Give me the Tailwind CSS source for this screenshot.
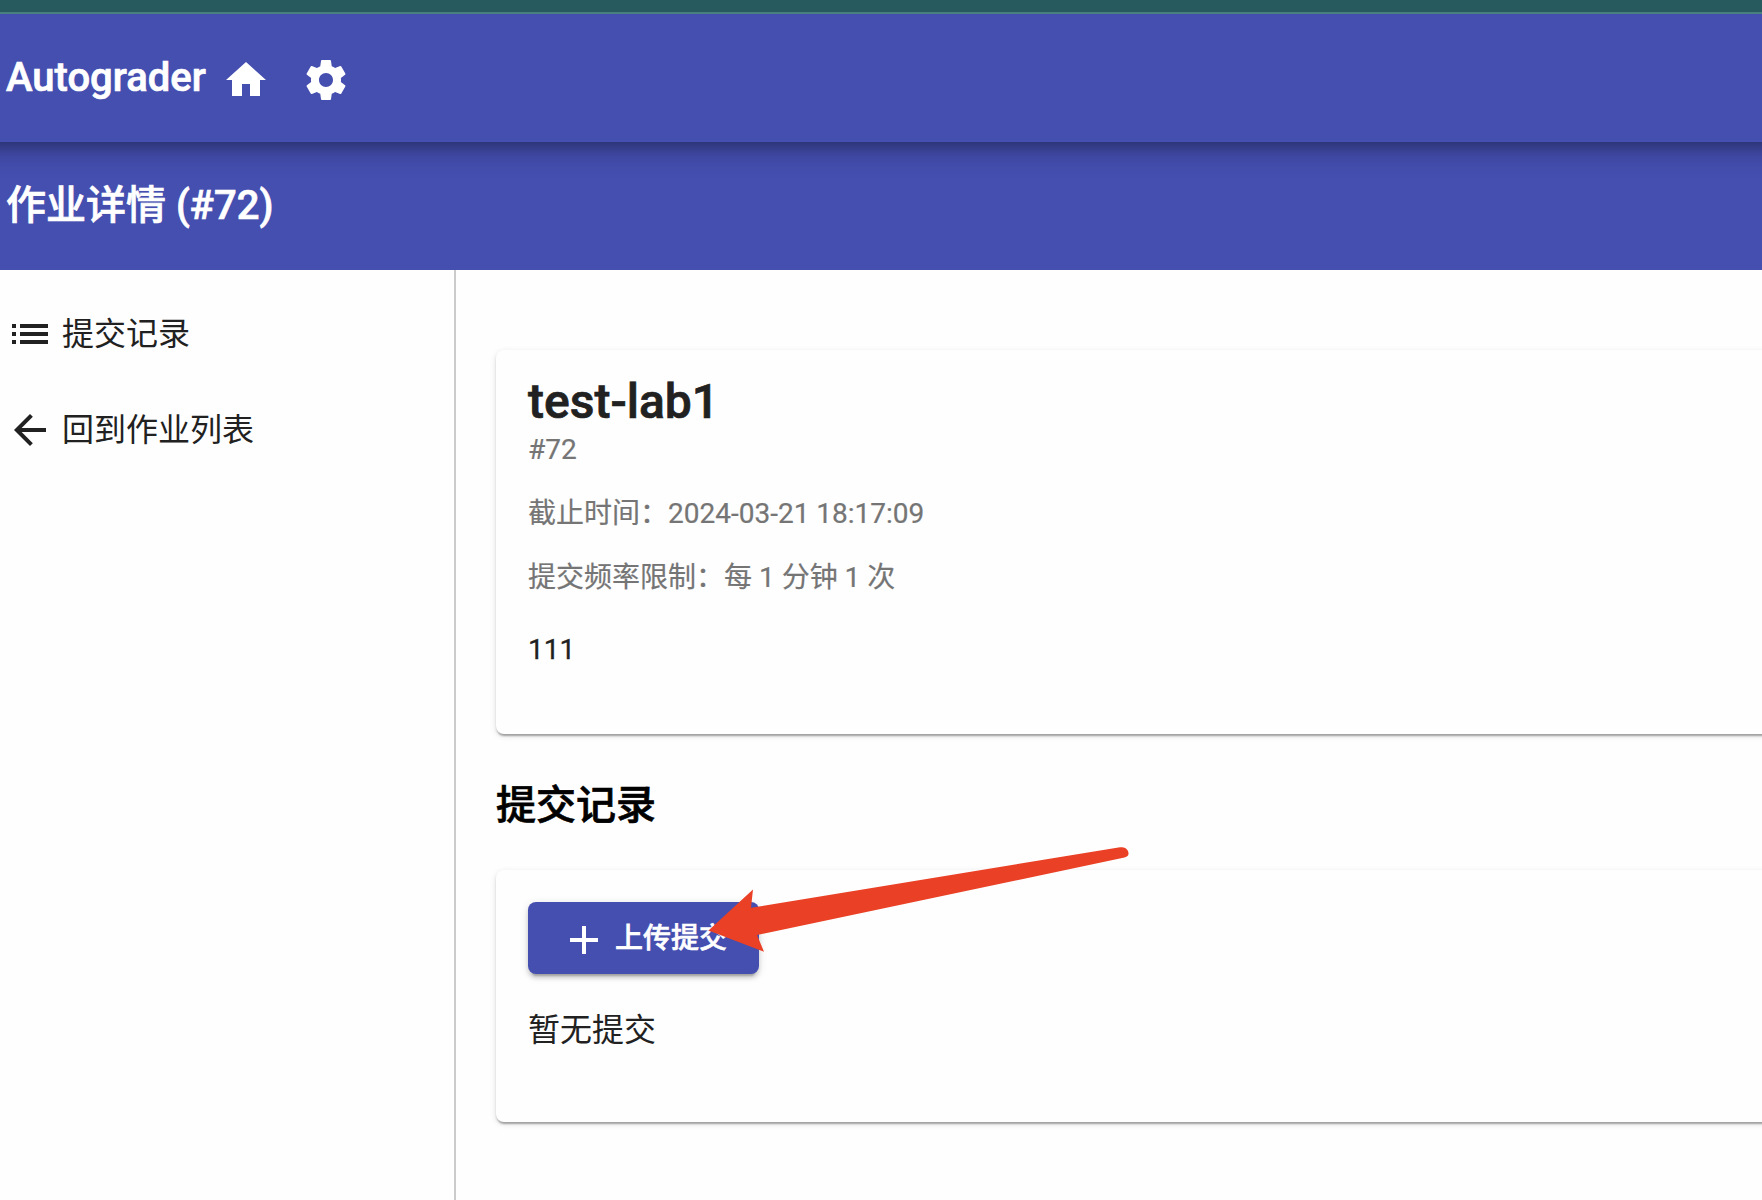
<!DOCTYPE html>
<html lang="zh-CN">
<head>
<meta charset="utf-8">
<title>Autograder</title>
<script src="https://cdn.jsdelivr.net/npm/@tailwindcss/browser@4"></script>
</head>
<body class="relative flex h-[1200px] w-[1762px] flex-col overflow-hidden bg-[#fefefe] font-[Roboto,'Noto_Sans_CJK_SC',sans-serif] text-[#212121]">
  <div class="relative z-20 h-[14px] shrink-0 border-b-2 border-[#47807f] bg-[#265a5f]"></div>
  <header class="relative z-10 -mx-10 flex h-32 shrink-0 items-center bg-[#454fb0] pl-[46px] text-white shadow-[0_6px_10px_-2px_rgba(0,0,0,0.2),0_12px_20px_0_rgba(0,0,0,0.14),0_2px_36px_0_rgba(0,0,0,0.12)]">
    <h1 class="w-[216px] whitespace-nowrap text-[40px] font-medium leading-[64px] [-webkit-text-stroke:0.7px]">Autograder</h1>
    <svg class="mt-1 size-12" viewBox="0 0 24 24" fill="currentColor"><path d="M10 20v-6h4v6h5v-8h3L12 3 2 12h3v8z"/></svg>
    <svg class="mt-1 ml-8 size-12" viewBox="0 0 24 24" fill="currentColor"><path d="M19.43 12.98c.04-.32.07-.64.07-.98s-.03-.66-.07-.98l2.11-1.65c.19-.15.24-.42.12-.64l-2-3.46c-.12-.22-.39-.3-.61-.22l-2.49 1c-.52-.4-1.08-.73-1.69-.98l-.38-2.65C14.46 2.18 14.25 2 14 2h-4c-.25 0-.46.18-.49.42l-.38 2.65c-.61.25-1.17.59-1.69.98l-2.49-1c-.23-.09-.49 0-.61.22l-2 3.46c-.13.22-.07.49.12.64l2.11 1.65c-.04.32-.07.65-.07.98s.03.66.07.98l-2.11 1.65c-.19.15-.24.42-.12.64l2 3.46c.12.22.39.3.61.22l2.49-1c.52.4 1.08.73 1.69.98l.38 2.65c.03.24.24.42.49.42h4c.25 0 .46-.18.49-.42l.38-2.65c.61-.25 1.17-.59 1.69-.98l2.49 1c.23.09.49 0 .61-.22l2-3.46c.12-.22.07-.49-.12-.64l-2.11-1.65zM12 15.5c-1.93 0-3.5-1.57-3.5-3.5s1.57-3.500 3.500-3.500 3.500 1.570 3.500 3.500-1.570 3.500-3.500 3.500z"/></svg>
  </header>
  <div class="flex h-32 shrink-0 items-center bg-[#454fb0] pl-1.5 text-white">
    <h2 class="relative z-20 text-[40px] font-medium leading-[64px] [-webkit-text-stroke:0.7px]">作业详情 (#72)</h2>
  </div>
  <div class="flex flex-1">
    <nav class="w-[456px] shrink-0 border-r-2 border-[#cbcbcb] pt-4 text-[32px]">
      <a class="flex h-24 items-center pl-1.5"><svg class="mr-2 size-12" viewBox="0 0 24 24" fill="currentColor"><path d="M3 13h2v-2H3v2zm0 4h2v-2H3v2zm0-8h2V7H3v2zm4 4h14v-2H7v2zm0 4h14v-2H7v2zM7 7v2h14V7H7z"/></svg>提交记录</a>
      <a class="flex h-24 items-center pl-1.5"><svg class="mr-2 size-12" viewBox="0 0 24 24" fill="currentColor"><path d="M20 11H7.83l5.59-5.59L12 4l-8 8 8 8 1.41-1.41L7.83 13H20v-2z"/></svg>回到作业列表</a>
    </nav>
    <main class="min-w-0 flex-1 pl-10 pt-20">
      <section class="-mr-4 h-96 rounded-lg bg-[#fefefe] px-8 pt-5 text-[28px] leading-8 shadow-[0_4px_2px_-2px_rgba(0,0,0,0.2),0_2px_2px_0_rgba(0,0,0,0.14),0_2px_6px_0_rgba(0,0,0,0.12)]">
        <h3 class="text-[48px] font-medium leading-[64px] [-webkit-text-stroke:0.7px]">test-lab1</h3>
        <div class="text-[#757575] [-webkit-text-stroke:0.2px]">
          <p>#72</p>
          <p class="mt-8">截止时间：2024-03-21 18:17:09</p>
          <p class="mt-8">提交频率限制：每 1 分钟 1 次</p>
        </div>
        <p class="mt-10 [-webkit-text-stroke:0.3px]">111</p>
      </section>
      <h3 class="mt-10 text-[40px] font-medium leading-[64px] text-black [-webkit-text-stroke:0.7px]">提交记录</h3>
      <section class="-mr-4 mt-8 h-[252px] rounded-lg bg-[#fefefe] px-8 pt-8 shadow-[0_4px_2px_-2px_rgba(0,0,0,0.2),0_2px_2px_0_rgba(0,0,0,0.14),0_2px_6px_0_rgba(0,0,0,0.12)]">
        <button class="flex h-[72px] w-[231px] items-center rounded-lg bg-[#454fb0] pl-8 text-[28px] font-medium text-white shadow-[0_6px_2px_-4px_rgba(0,0,0,0.2),0_4px_4px_0_rgba(0,0,0,0.14),0_2px_10px_0_rgba(0,0,0,0.12)]"><svg class="mt-1 mr-[7px] size-12" viewBox="0 0 24 24" fill="currentColor"><path d="M19 13h-6v6h-2v-6H5v-2h6V5h2v6h6z"/></svg><span class="whitespace-nowrap pt-0.5 [-webkit-text-stroke:0.6px]">上传提交</span></button>
        <p class="mt-8 text-[32px] leading-[48px]">暂无提交</p>
      </section>
    </main>
  </div>
  <!-- pointer annotation over the upload button -->
  <svg class="absolute left-[700px] top-[840px] z-20 h-[120px] w-[440px]" viewBox="700 840 440 120" fill="#ea4025"><path d="M708.5 930.5L753 889.5L751 907.8L1120 847.3Q1126 846.5 1128 851Q1130 856.500 1124.500 857.500L757 935L764 951.8Z"/></svg>
</body>
</html>
